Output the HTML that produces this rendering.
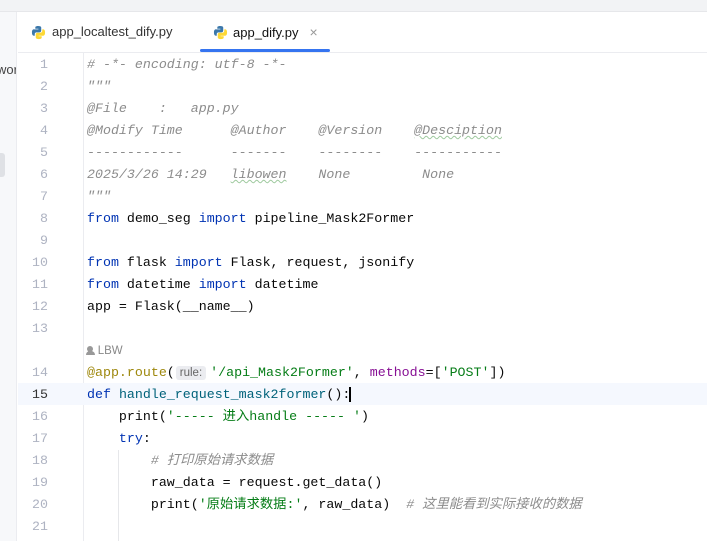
<!DOCTYPE html>
<html><head><meta charset="utf-8"><style>
*{margin:0;padding:0;box-sizing:border-box}
body{width:707px;height:541px;overflow:hidden;background:#fff;font-family:"Liberation Sans","Noto Sans CJK SC",sans-serif;position:relative}
.top{position:absolute;left:0;top:0;width:707px;height:12px;background:#f2f3f5;border-bottom:1px solid #e6e7ea}
.side{position:absolute;left:0;top:12px;width:17px;height:529px;background:#f7f8fa;border-right:1px solid #ebecf0;overflow:hidden}
.side .wor{position:absolute;left:-3px;top:50px;font-size:13px;color:#444}
.side .sel{position:absolute;left:-4px;top:141px;width:9px;height:24px;background:#dfe1e5;border-radius:3px}
.tabs{position:absolute;left:18px;top:12px;width:689px;height:41px;background:#fff;border-bottom:1px solid #ebecf0}
.tab{position:absolute;top:0;height:41px;font-size:13px;color:#333;line-height:40px}
.tab svg{position:absolute;left:0;top:13px}
.gut{position:absolute;left:18px;top:53px;width:66px;height:488px;border-right:1px solid #ebecf0}
.ln{position:absolute;left:18px;width:30px;text-align:right;font:13.3px "Liberation Mono",monospace;color:#aeb3c2;height:22px;line-height:22px}
.cl{position:absolute;left:87px;font:13.3px "Liberation Mono","Noto Sans CJK SC",monospace;height:22px;line-height:22px;white-space:pre;color:#080808}
.c{color:#8c8c8c;font-style:italic}
.k{color:#0033b3}.f{color:#00627a}.s{color:#067d17}.d{color:#9e880d}.p{color:#871094}
.hl{position:absolute;left:18px;top:383px;width:689px;height:22px;background:#f5f8fe}
.wv{text-decoration:underline wavy #9ec99e;text-decoration-thickness:1px}
.inl{background:#ebecf0;color:#666;font-family:"Liberation Sans",sans-serif;font-size:11.5px;border-radius:3px;padding:1px 4px;margin:0 4px 0 1px}
</style></head><body>
<div class="top"></div>
<div class="side"><div class="wor">wor</div><div class="sel"></div></div>
<div class="tabs">
 <div class="tab" style="left:13px"><svg width="15" height="15" viewBox="0 0 16 16"><path d="M7.8 1C4.5 1 4.6 2.4 4.6 2.4V4h3.3v.6H3.2S1 4.3 1 7.9s1.9 3.5 1.9 3.5H4V9.7s0-1.9 1.9-1.9h3.2s1.8 0 1.8-1.8V2.8S11.2 1 7.8 1z" fill="#3c78aa"/><path d="M8.2 15c3.3 0 3.2-1.4 3.2-1.4V12H8.1v-.6h4.7S15 11.7 15 8.1s-1.9-3.5-1.9-3.5H12v1.7s0 1.9-1.9 1.9H6.9s-1.8 0-1.8 1.8v3.2S4.8 15 8.2 15z" fill="#fdd835"/></svg><span style="margin-left:21px">app_localtest_dify.py</span></div>
 <div class="tab" style="left:195px"><svg width="15" height="15" viewBox="0 0 16 16"><path d="M7.8 1C4.5 1 4.6 2.4 4.6 2.4V4h3.3v.6H3.2S1 4.3 1 7.9s1.9 3.5 1.9 3.5H4V9.7s0-1.9 1.9-1.9h3.2s1.8 0 1.8-1.8V2.8S11.2 1 7.8 1z" fill="#3c78aa"/><path d="M8.2 15c3.3 0 3.2-1.4 3.2-1.4V12H8.1v-.6h4.7S15 11.7 15 8.1s-1.9-3.5-1.9-3.5H12v1.7s0 1.9-1.9 1.9H6.9s-1.8 0-1.8 1.8v3.2S4.8 15 8.2 15z" fill="#fdd835"/></svg><span style="margin-left:20px;color:#111">app_dify.py</span><span style="margin-left:11px;color:#999;font-size:14px">×</span></div>
 <div style="position:absolute;left:182px;top:37px;width:130px;height:3px;background:#3574f0;border-radius:2px"></div>
</div>
<div class="gut"></div>
<div class="hl"></div>
<div style="position:absolute;left:118px;top:450px;width:1px;height:91px;background:#e6e7ea"></div>

<div class="ln" style="top:54px">1</div><div class="cl c" style="top:54px"># -*- encoding: utf-8 -*-</div>
<div class="ln" style="top:76px">2</div><div class="cl c" style="top:76px">"""</div>
<div class="ln" style="top:98px">3</div><div class="cl c" style="top:98px">@File    :   app.py</div>
<div class="ln" style="top:120px">4</div><div class="cl c" style="top:120px">@Modify Time      @Author    @Version    <span class="wv">@Desciption</span></div>
<div class="ln" style="top:142px">5</div><div class="cl c" style="top:142px">------------      -------    --------    -----------</div>
<div class="ln" style="top:164px">6</div><div class="cl c" style="top:164px">2025/3/26 14:29   <span class="wv">libowen</span>    None         None</div>
<div class="ln" style="top:186px">7</div><div class="cl c" style="top:186px">"""</div>
<div class="ln" style="top:208px">8</div><div class="cl" style="top:208px"><span class="k">from</span> demo_seg <span class="k">import</span> pipeline_Mask2Former</div>
<div class="ln" style="top:230px">9</div>
<div class="ln" style="top:252px">10</div><div class="cl" style="top:252px"><span class="k">from</span> flask <span class="k">import</span> Flask, request, jsonify</div>
<div class="ln" style="top:274px">11</div><div class="cl" style="top:274px"><span class="k">from</span> datetime <span class="k">import</span> datetime</div>
<div class="ln" style="top:296px">12</div><div class="cl" style="top:296px">app = Flask(__name__)</div>
<div class="ln" style="top:318px">13</div>
<div class="cl" style="top:340px;font-family:'Liberation Sans',sans-serif;font-size:11.5px;color:#888"><span style="display:inline-block;width:6px;height:6px;border-radius:3px;background:#999;vertical-align:0;position:relative;top:-2px"></span><span style="display:inline-block;width:9px;height:4px;border-radius:4px 4px 0 0;background:#999;margin-left:-7.5px;vertical-align:-1px"></span> LBW</div>
<div class="ln" style="top:362px">14</div><div class="cl" style="top:362px"><span class="d">@app.route</span>(<span class="inl">rule:</span><span class="s">'/api_Mask2Former'</span>, <span class="p">methods</span>=[<span class="s">'POST'</span>])</div>
<div class="ln" style="top:384px;color:#333">15</div><div class="cl" style="top:384px"><span class="k">def</span> <span class="f">handle_request_mask2former</span>():<span style="border-left:2px solid #000;margin-left:-1px"></span></div>
<div class="ln" style="top:406px">16</div><div class="cl" style="top:406px">    print(<span class="s">'----- 进入handle ----- '</span>)</div>
<div class="ln" style="top:428px">17</div><div class="cl" style="top:428px">    <span class="k">try</span>:</div>
<div class="ln" style="top:450px">18</div><div class="cl c" style="top:450px">        # 打印原始请求数据</div>
<div class="ln" style="top:472px">19</div><div class="cl" style="top:472px">        raw_data = request.get_data()</div>
<div class="ln" style="top:494px">20</div><div class="cl" style="top:494px">        print(<span class="s">'原始请求数据:'</span>, raw_data)  <span class="c"># 这里能看到实际接收的数据</span></div>
<div class="ln" style="top:516px">21</div>
</body></html>
